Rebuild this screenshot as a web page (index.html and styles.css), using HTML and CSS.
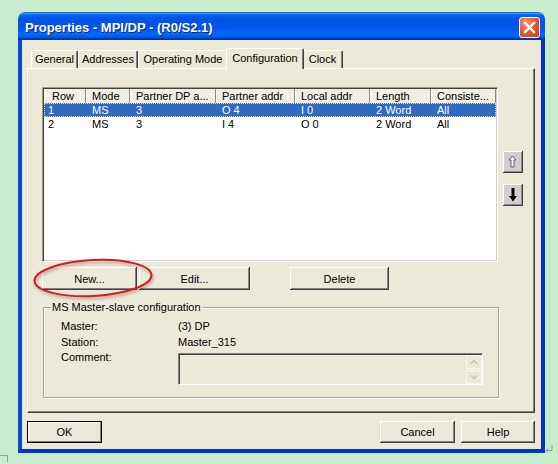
FILE: index.html
```html
<!DOCTYPE html>
<html>
<head>
<meta charset="utf-8">
<link rel="stylesheet" href="styles.css">
</head>
<body>
<div class="desktop">
  <div class="window">
    <div class="titlebar">
      <span class="title">Properties - MPI/DP - (R0/S2.1)</span>
      <div class="close">
        <svg width="19" height="19" viewBox="0 0 19 19"><path d="M5 5 L14 14 M14 5 L5 14" stroke="#fff" stroke-width="2.4" stroke-linecap="square"/></svg>
      </div>
    </div>
    <div class="frame">
      <div class="tabs">
        <div class="tab t-general">General</div>
        <div class="tab t-addr">Addresses</div>
        <div class="tab t-op">Operating Mode</div>
        <div class="tab t-conf active">Configuration</div>
        <div class="tab t-clock">Clock</div>
      </div>
      <div class="panel">
        <div class="listarea">
          <div class="list">
            <div class="lv-head">
              <div class="hc">Row</div>
              <div class="hc">Mode</div>
              <div class="hc">Partner DP a...</div>
              <div class="hc">Partner addr</div>
              <div class="hc">Local addr</div>
              <div class="hc">Length</div>
              <div class="hc">Consiste...</div>
            </div>
            <div class="lv-row sel">
              <div class="c">1</div><div class="c">MS</div><div class="c">3</div><div class="c">O 4</div><div class="c">I 0</div><div class="c">2 Word</div><div class="c">All</div>
            </div>
            <div class="lv-row">
              <div class="c">2</div><div class="c">MS</div><div class="c">3</div><div class="c">I 4</div><div class="c">O 0</div><div class="c">2 Word</div><div class="c">All</div>
            </div>
          </div>
          <div class="movebtns">
            <div class="mbtn">
              <svg width="20" height="22" viewBox="0 0 20 22"><polygon points="9.5,5 13,9 11,9 11,16 8,16 8,9 6,9" fill="#fff" stroke="#5a5a5a" stroke-width="1"/></svg>
            </div>
            <div class="mbtn down">
              <svg width="20" height="22" viewBox="0 0 20 22"><polygon points="8.5,4 11.5,4 11.5,12 14,12 10,17.5 6,12 8.5,12" fill="#000"/></svg>
            </div>
          </div>
        </div>
        <div class="btnrow">
          <button class="btn b-new">New...</button>
          <button class="btn b-edit">Edit...</button>
          <button class="btn b-del">Delete</button>
        </div>
        <fieldset class="group">
          <legend>MS Master-slave configuration</legend>
          <div class="grow"><span>Master:</span><span>(3) DP</span></div>
          <div class="grow"><span>Station:</span><span>Master_315</span></div>
          <div class="grow comment"><span>Comment:</span>
            <div class="cbox">
              <div class="sb">
                <div class="sbtn"><svg width="14" height="12" viewBox="0 0 14 12"><path d="M4 7.5 L7 4.5 L10 7.5" stroke="#c4c3b8" stroke-width="1.4" fill="none"/></svg></div>
                <div class="sbtn"><svg width="14" height="12" viewBox="0 0 14 12"><path d="M4 4.5 L7 7.5 L10 4.5" stroke="#c4c3b8" stroke-width="1.4" fill="none"/></svg></div>
              </div>
            </div>
          </div>
        </fieldset>
      </div>
      <div class="footer">
        <button class="btn default b-ok">OK</button>
        <button class="btn b-cancel">Cancel</button>
        <button class="btn b-help">Help</button>
      </div>
    </div>
  </div>
  <svg class="ellipse" width="130" height="48" viewBox="0 0 130 48"><ellipse cx="62" cy="21" rx="58.5" ry="18" transform="rotate(-3 62 21)" fill="none" stroke="#d61c1c" stroke-width="2"/></svg>
  <svg class="mark-bl" width="10" height="8" viewBox="0 0 10 8"><path d="M0 1.5 H7.5 V8" stroke="#9a9a9a" stroke-width="1" fill="none"/></svg>
  <svg class="mark-br" width="10" height="9" viewBox="0 0 10 9"><path d="M8 0 V5.5 H2 M4 3.5 L2 5.5 L4 7.5" stroke="#9a9a9a" stroke-width="1" fill="none"/></svg>
</div>
</body>
</html>
```

FILE: styles.css
```css
* { box-sizing: border-box; }
html, body { margin: 0; padding: 0; }
body {
  background: #c7edcc;
  width: 558px;
  height: 464px;
  overflow: hidden;
  font-family: "Liberation Sans", Arial, sans-serif;
  font-size: 11px;
  color: #000;
}
.desktop {
  position: relative;
  width: 558px;
  height: 464px;
  padding: 12px 0 0 18px;
}
.window { width: 527px; }

.titlebar {
  height: 28px;
  border-radius: 7px 7px 0 0;
  background: linear-gradient(to bottom, #0058ee 0%, #3593ff 4%, #288eff 6%, #127dff 8%, #036ffc 10%, #0262ee 14%, #0057e5 20%, #0054e3 24%, #0055eb 56%, #005bf5 66%, #026afe 76%, #0062ef 86%, #0052d6 92%, #0040ab 94%, #003092 100%);
  display: flex;
  align-items: center;
  justify-content: space-between;
  padding: 2px 5px 0 7px;
}
.title {
  color: #fff;
  font-weight: bold;
  font-size: 13px;
  text-shadow: 1px 1px 0 #0b2a8c;
}
.close {
  width: 21px;
  height: 21px;
  border: 1px solid #fff;
  border-radius: 3px;
  background: radial-gradient(circle at 30% 25%, #f39a7c 0%, #e2613c 40%, #cc3a12 100%);
  display: flex;
  align-items: center;
  justify-content: center;
}

.frame {
  background: #ece9d8;
  border-left: 4px solid #0a46da;
  border-right: 4px solid #0534c0;
  border-bottom: 4px solid #0534c0;
  height: 413px;
  padding: 8px 6px 6px 5px;
  display: flex;
  flex-direction: column;
}

.tabs {
  display: flex;
  align-items: flex-end;
  height: 20px;
  padding-left: 4px;
}
.tab {
  height: 18px;
  line-height: 17px;
  text-align: center;
  white-space: nowrap;
  border-top: 1px solid #fff;
  border-left: 1px solid #fff;
  border-right: 1px solid #404040;
  box-shadow: inset -1px 0 #808080;
  border-radius: 2px 2px 0 0;
}
.t-general { width: 47px; }
.t-addr { width: 60px; }
.t-op { width: 90px; }
.t-clock { width: 41px; }
.tab.active {
  width: 78px;
  height: 21px;
  line-height: 18px;
  margin: 0 -2px -1px -2px;
  background: #ece9d8;
  position: relative;
  z-index: 1;
}

.panel {
  height: 345px;
  border-top: 1px solid #fff;
  border-left: 1px solid #fff;
  border-right: 1px solid #404040;
  border-bottom: 1px solid #404040;
  box-shadow: inset -1px -1px #808080;
  padding: 18px 0 0 14px;
}

.listarea { display: flex; gap: 5px; }
.list {
  width: 456px;
  height: 175px;
  background: #fff;
  border-top: 1px solid #9d9a8c;
  border-left: 1px solid #9d9a8c;
  border-right: 1px solid #fff;
  border-bottom: 1px solid #fff;
  box-shadow: inset 1px 1px #404040, inset -1px -1px #d4d0c8;
  padding: 1px;
}
.lv-head, .lv-row {
  display: grid;
  grid-template-columns: 42px 44px 86px 79px 75px 61px 65px;
  width: 452px;
}
.lv-head { background: #f1efe4; }
.hc {
  height: 14px;
  line-height: 14px;
  padding-left: 6px;
  white-space: nowrap;
  overflow: hidden;
  box-shadow: inset -1px 0 #8c8a80, inset 1px 0 #fff;
}
.hc:first-child { padding-left: 8px; }
.c {
  height: 14px;
  line-height: 14px;
  padding-left: 6px;
  white-space: nowrap;
}
.c:first-child { padding-left: 4px; }
.lv-row.sel {
  background: #316ac5;
  color: #fff;
  outline: 1px dotted #e8e2b0;
  outline-offset: -1px;
}

.movebtns {
  display: flex;
  flex-direction: column;
  gap: 11px;
  margin-top: 64px;
}
.mbtn {
  width: 20px;
  height: 22px;
  background: #cfcfcf;
  box-shadow: inset -1px -1px #404040, inset 1px 1px #fff, inset -2px -2px #8a8a8a;
}

.btn {
  font-family: "Liberation Sans", Arial, sans-serif;
  font-size: 11px;
  color: #000;
  background: #ece9d8;
  border: none;
  padding: 0;
  height: 23px;
  box-shadow: inset -1px -1px #404040, inset 1px 1px #fff, inset -2px -2px #808080;
}
.btnrow { display: flex; margin-top: 5px; }
.b-new { width: 95px; }
.b-edit { width: 111px; margin-left: 2px; }
.b-del { width: 99px; margin-left: 40px; }

.group {
  margin: 11px 0 0 1px;
  width: 456px;
  border: 1px solid #a9a697;
  box-shadow: inset 1px 1px #fff, 1px 1px #fff;
  padding: 5px 0 12px 17px;
  min-inline-size: 0;
}
.group legend {
  margin-left: -10px;
  padding: 0 1px;
  line-height: 12px;
}
.grow {
  display: grid;
  grid-template-columns: 117px 305px;
  line-height: 16px;
}
.grow.comment { line-height: 14px; }
.cbox {
  margin-top: 3px;
  height: 32px;
  border-top: 1px solid #808080;
  border-left: 1px solid #808080;
  border-right: 1px solid #fff;
  border-bottom: 1px solid #fff;
  box-shadow: inset 1px 1px #404040;
  display: flex;
  justify-content: flex-end;
  padding: 1px 0 1px 0;
}
.sb { display: flex; flex-direction: column; width: 16px; gap: 1px; }
.sbtn {
  height: 14px;
  border: 1px solid #f6f5ef;
  background: #ece9d8;
  display: flex;
  align-items: center;
  justify-content: center;
}

.footer {
  display: flex;
  margin-top: 8px;
}
.footer .btn { height: 22px; }
.b-ok { width: 75px; }
.btn.default {
  box-shadow: inset 0 0 0 1px #000, inset -2px -2px #808080, inset 2px 2px #fff;
}
.b-cancel { width: 75px; margin-left: auto; }
.b-help { width: 74px; margin-left: 6px; }

.ellipse {
  position: absolute;
  left: 31px;
  top: 257px;
  filter: drop-shadow(1px 2px 1.5px rgba(110, 50, 50, 0.45));
}
.mark-bl { position: absolute; left: 0; top: 454px; }
.mark-br { position: absolute; left: 544px; top: 445px; }
```
